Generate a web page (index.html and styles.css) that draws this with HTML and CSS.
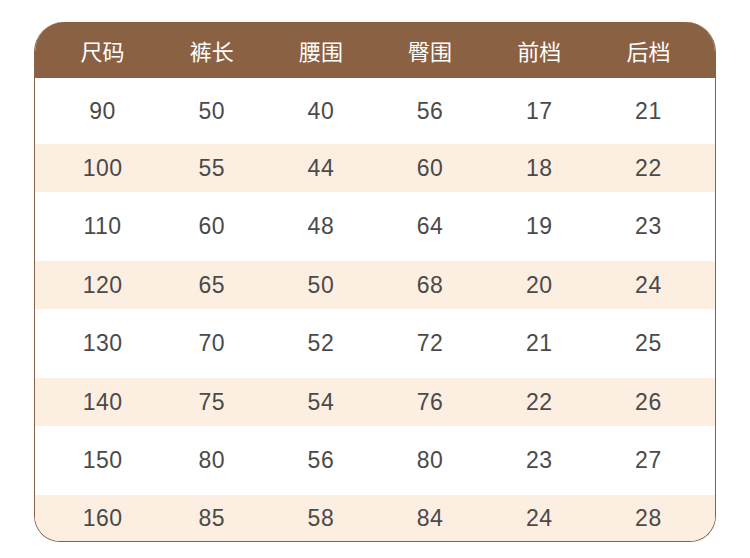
FILE: index.html
```html
<!DOCTYPE html>
<html lang="zh">
<head>
<meta charset="utf-8">
<link rel="stylesheet" href="styles.css">
</head>
<body>
<div class="table">
  <div class="row head">
    <div>尺码</div><div>裤长</div><div>腰围</div><div>臀围</div><div>前档</div><div>后档</div>
  </div>
  <div class="row first"><div>90</div><div>50</div><div>40</div><div>56</div><div>17</div><div>21</div></div>
  <div class="row alt"><div>100</div><div>55</div><div>44</div><div>60</div><div>18</div><div>22</div></div>
  <div class="row"><div>110</div><div>60</div><div>48</div><div>64</div><div>19</div><div>23</div></div>
  <div class="row alt"><div>120</div><div>65</div><div>50</div><div>68</div><div>20</div><div>24</div></div>
  <div class="row"><div>130</div><div>70</div><div>52</div><div>72</div><div>21</div><div>25</div></div>
  <div class="row alt"><div>140</div><div>75</div><div>54</div><div>76</div><div>22</div><div>26</div></div>
  <div class="row"><div>150</div><div>80</div><div>56</div><div>80</div><div>23</div><div>27</div></div>
  <div class="row alt last"><div>160</div><div>85</div><div>58</div><div>84</div><div>24</div><div>28</div></div>
</div>
</body>
</html>
```

FILE: styles.css
```css
html, body {
  margin: 0;
  padding: 0;
  background: #ffffff;
}
body {
  padding: 22px 0 0 34px;
  font-family: "Liberation Sans", "Noto Sans CJK SC", sans-serif;
}
.table {
  width: 680px;
  height: 519px;
  border: 1px solid #8b6144;
  border-top: 0;
  border-radius: 30px 30px 26px 26px;
  overflow: hidden;
  background: #ffffff;
}
.row {
  display: grid;
  grid-template-columns: repeat(6, 1fr);
  padding: 0 12px 0 13px;
  height: 69px;
  align-items: center;
  text-align: center;
  font-size: 23px;
  letter-spacing: 0.5px;
  color: #4a4a4a;
}
.row.head {
  height: 56px;
  margin: 0 -1px;
  padding: 0 13px 0 14px;
  background: #8b6144;
  color: #ffffff;
  font-family: "Noto Sans CJK SC", sans-serif;
  font-size: 22px;
  letter-spacing: 0;
}
.row.first {
  height: 66px;
}
.row.alt {
  height: 48px;
  background: #fdeee2;
}
.row.last {
  height: 47px;
}
```
